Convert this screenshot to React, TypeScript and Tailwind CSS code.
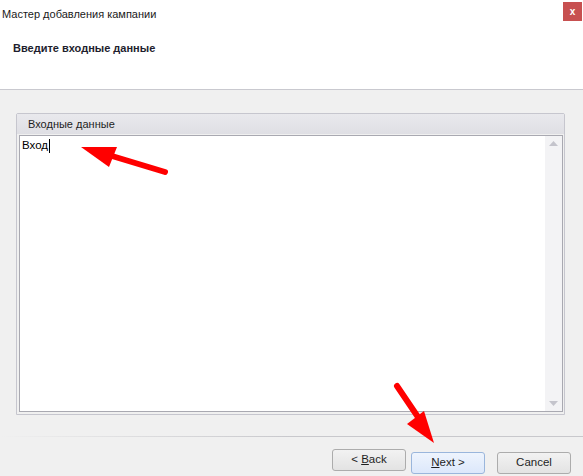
import React from "react";

const Btn: React.FC<{ children: React.ReactNode; primary?: boolean }> = ({ children, primary }) => (
  <button
    className={`w-[74px] h-[22px] rounded-[3px] border text-[11.5px] text-[#1e1e1e] leading-none ${
      primary
        ? "border-[#9ab6dc] bg-gradient-to-b from-[#eef4fd] to-[#dce8fb]"
        : "border-[#acacac] bg-gradient-to-b from-[#f2f2f2] to-[#e3e3e3]"
    }`}
  >
    {children}
  </button>
);

export default function App() {
  return (
    <div
      className="relative w-[583px] h-[476px] bg-[#f0f0f0] flex flex-col overflow-hidden"
      style={{ fontFamily: '"Liberation Sans", Arial, sans-serif' }}
    >
      {/* header */}
      <div className="bg-white h-[90px] border-b border-[#c9c9cf] flex flex-col">
        <div className="flex justify-between items-start h-[30px]">
          <div className="pl-[2px] pt-[6px] text-[11px] text-[#1a1a1a]">Мастер добавления кампании</div>
          <div className="mt-[2px] mr-[1px] w-[19px] h-[19px] bg-[#c75050] text-white text-[10px] font-bold flex items-center justify-center">
            x
          </div>
        </div>
        <div className="pl-[13px] pt-[10px] text-[11px] font-bold text-[#1e1e2e]">Введите входные данные</div>
      </div>

      {/* group box */}
      <div className="mt-[23px] ml-[16px] w-[549px] h-[302px] border border-[#c6c6ce] rounded-t-[2px] flex flex-col pl-[2px] pr-[1px] pb-[2px]">
        <div className="-ml-[2px] -mr-[1px] h-[20px] bg-gradient-to-b from-[#e9e9ed] to-[#dfdfe4] pl-[11px] text-[11px] text-[#1e1e1e] leading-[20px]">
          Входные данные
        </div>
        <div className="mt-[1px] flex-1 border border-[#a9a9b1] bg-white flex">
          <div className="flex-1 pl-[2px] pt-[1px] text-[11.5px] text-black leading-[16px]">
            Вход<span className="inline-block w-[1px] h-[14px] bg-black align-middle ml-[1px]" />
          </div>
          <div className="w-[17px] bg-[#f3f3f5] flex flex-col justify-between items-center py-[5px]">
            <svg width="9" height="5" viewBox="0 0 9 5">
              <path d="M0 5 L4.5 0 L9 5 Z" fill="#c4c4cc" />
            </svg>
            <svg width="9" height="5" viewBox="0 0 9 5">
              <path d="M0 0 L4.5 5 L9 0 Z" fill="#c4c4cc" />
            </svg>
          </div>
        </div>
      </div>

      {/* separator */}
      <div className="mt-[21px] h-[1px] bg-gradient-to-r from-[#f0f0f0] via-[#c8c8cc] to-[#c8c8cc]" />

      {/* buttons */}
      <div className="mt-[12px] flex justify-end pr-[12px]">
        <Btn>
          &lt; <span className="underline">B</span>ack
        </Btn>
        <div className="ml-[5px]">
          <Btn primary>
            <span className="underline">N</span>ext &gt;
          </Btn>
        </div>
        <div className="ml-[12px]">
          <Btn>Cancel</Btn>
        </div>
      </div>

      {/* arrows overlay */}
      <svg className="absolute inset-0 pointer-events-none" width="583" height="476" viewBox="0 0 583 476">
        <line x1="165" y1="172" x2="112" y2="156" stroke="#ff0000" strokeWidth="6" strokeLinecap="round" />
        <path d="M81 147 L117 147 L109 167 Z" fill="#ff0000" />
        <line x1="397" y1="386" x2="420" y2="420" stroke="#ff0000" strokeWidth="6" strokeLinecap="round" />
        <path d="M434 443 L407 424 L424 411 Z" fill="#ff0000" />
      </svg>
    </div>
  );
}
